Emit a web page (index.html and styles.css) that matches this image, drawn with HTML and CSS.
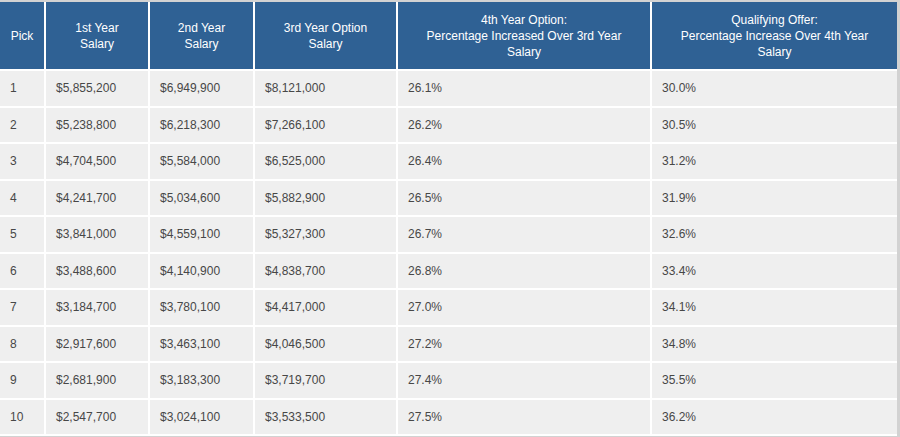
FILE: index.html
```html
<!DOCTYPE html>
<html>
<head>
<meta charset="utf-8">
<link rel="stylesheet" href="styles.css">
</head>
<body>
<div class="table" role="table">
  <div class="th">Pick</div>
  <div class="th">1st Year<br>Salary</div>
  <div class="th">2nd Year<br>Salary</div>
  <div class="th">3rd Year Option<br>Salary</div>
  <div class="th">4th Year Option:<br>Percentage Increased Over 3rd Year<br>Salary</div>
  <div class="th">Qualifying Offer:<br>Percentage Increase Over 4th Year<br>Salary</div>

  <div class="td">1</div><div class="td">$5,855,200</div><div class="td">$6,949,900</div><div class="td">$8,121,000</div><div class="td">26.1%</div><div class="td">30.0%</div>
  <div class="td">2</div><div class="td">$5,238,800</div><div class="td">$6,218,300</div><div class="td">$7,266,100</div><div class="td">26.2%</div><div class="td">30.5%</div>
  <div class="td">3</div><div class="td">$4,704,500</div><div class="td">$5,584,000</div><div class="td">$6,525,000</div><div class="td">26.4%</div><div class="td">31.2%</div>
  <div class="td">4</div><div class="td">$4,241,700</div><div class="td">$5,034,600</div><div class="td">$5,882,900</div><div class="td">26.5%</div><div class="td">31.9%</div>
  <div class="td">5</div><div class="td">$3,841,000</div><div class="td">$4,559,100</div><div class="td">$5,327,300</div><div class="td">26.7%</div><div class="td">32.6%</div>
  <div class="td">6</div><div class="td">$3,488,600</div><div class="td">$4,140,900</div><div class="td">$4,838,700</div><div class="td">26.8%</div><div class="td">33.4%</div>
  <div class="td">7</div><div class="td">$3,184,700</div><div class="td">$3,780,100</div><div class="td">$4,417,000</div><div class="td">27.0%</div><div class="td">34.1%</div>
  <div class="td">8</div><div class="td">$2,917,600</div><div class="td">$3,463,100</div><div class="td">$4,046,500</div><div class="td">27.2%</div><div class="td">34.8%</div>
  <div class="td">9</div><div class="td">$2,681,900</div><div class="td">$3,183,300</div><div class="td">$3,719,700</div><div class="td">27.4%</div><div class="td">35.5%</div>
  <div class="td">10</div><div class="td">$2,547,700</div><div class="td">$3,024,100</div><div class="td">$3,533,500</div><div class="td">27.5%</div><div class="td">36.2%</div>
</div>
</body>
</html>
```
FILE: styles.css
```css
html, body {
  margin: 0;
  padding: 0;
}
body {
  background: #d2d2d2;
  padding-top: 2px;
  height: 435px;
  overflow: hidden;
  font-family: "Liberation Sans", Arial, sans-serif;
  font-size: 12px;
}
.table {
  width: 897px;
  display: grid;
  grid-template-columns: 44px 102px 103px 141px 252px 245px;
  grid-template-rows: 67px repeat(10, 34.5px);
  gap: 2px;
  background: #ffffff;
  padding-bottom: 2px;
}
.th {
  background: #2f6194;
  color: #ffffff;
  text-align: center;
  line-height: 16px;
  display: flex;
  align-items: center;
  justify-content: center;
}
.td {
  background: #efefef;
  color: #474747;
  padding-left: 10px;
  display: flex;
  align-items: center;
}
```
